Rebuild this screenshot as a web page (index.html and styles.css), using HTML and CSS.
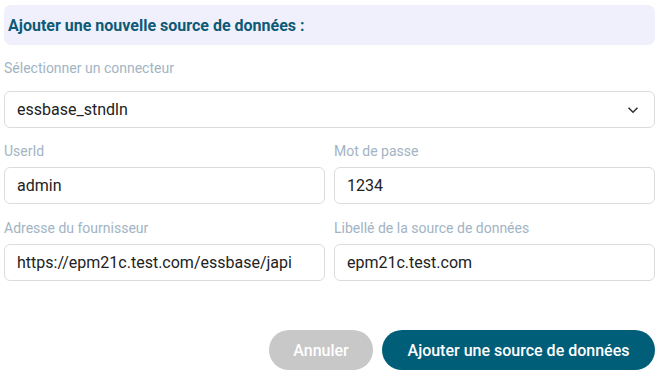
FILE: index.html
```html
<!DOCTYPE html>
<html lang="fr">
<head>
<meta charset="utf-8">
<link rel="stylesheet" href="styles.css">
</head>
<body>
<div class="panel">
  <div class="title">Ajouter une nouvelle source de données :</div>
  <div class="field">
    <label class="label">Sélectionner un connecteur</label>
    <div class="box select">
      <span>essbase_stndln</span>
      <svg class="chev" width="12" height="8" viewBox="0 0 12 8"><path d="M1.5 1.8 L6 6.2 L10.5 1.8" fill="none" stroke="#333" stroke-width="1.6"/></svg>
    </div>
  </div>
  <div class="grid">
    <div class="field">
      <label class="label">UserId</label>
      <div class="box">admin</div>
    </div>
    <div class="field">
      <label class="label">Mot de passe</label>
      <div class="box">1234</div>
    </div>
    <div class="field">
      <label class="label">Adresse du fournisseur</label>
      <div class="box">https://epm21c.test.com/essbase/japi</div>
    </div>
    <div class="field">
      <label class="label">Libellé de la source de données</label>
      <div class="box">epm21c.test.com</div>
    </div>
  </div>
  <div class="actions">
    <button class="btn cancel">Annuler</button>
    <button class="btn primary">Ajouter une source de données</button>
  </div>
</div>
</body>
</html>
```
FILE: styles.css
```css
* { box-sizing: border-box; }
html, body { margin: 0; padding: 0; background: #fff; }
body { font-family: Roboto, "Liberation Sans", sans-serif; }
.panel { width: 651px; margin: 5px 0 0 4px; display: flex; flex-direction: column; }
.title {
  height: 40px; background: #f0f0fc; border-radius: 7px;
  color: #0d5a76; font-weight: 700; font-size: 16px;
  padding: 0 4px; display: flex; align-items: center;
}
.field { display: flex; flex-direction: column; }
.label { color: #a2b4c4; font-size: 14px; line-height: 16px; }
.panel > .field { margin-top: 15px; }
.panel > .field .label { margin-bottom: 15px; }
.box {
  height: 37px; border: 1px solid #dcdcdc; border-radius: 6px;
  display: flex; align-items: center; padding: 0 12px;
  font-size: 16px; color: #222;
}
.select { justify-content: space-between; padding-right: 15px; }
.grid { display: grid; grid-template-columns: 1fr 1fr; column-gap: 9px; row-gap: 16px; margin-top: 15px; }
.grid .label { margin-bottom: 8px; }
.actions { display: flex; justify-content: flex-end; gap: 9px; margin-top: 49px; }
.btn {
  height: 40px; border: none; border-radius: 20px; color: #fff;
  font-family: Roboto, "Liberation Sans", sans-serif; font-size: 16px; font-weight: 500;
  padding: 0 24px;
}
.cancel { background: #c8c8c8; width: 104px; }
.primary { background: #015e79; width: 273px; }
```
